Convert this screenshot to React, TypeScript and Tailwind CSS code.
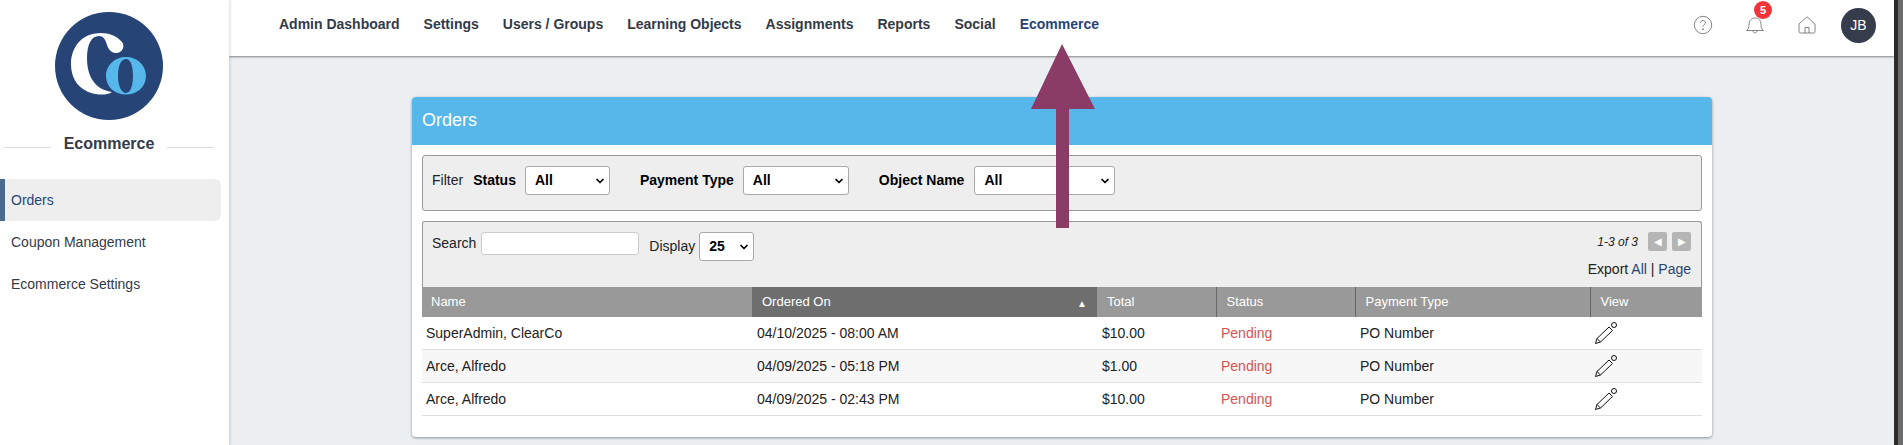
import { ChevronDown } from "lucide-react";

const navItems = ["Admin Dashboard", "Settings", "Users / Groups", "Learning Objects", "Assignments", "Reports", "Social", "Ecommerce"];

const rows = [
  { name: "SuperAdmin, ClearCo", date: "04/10/2025 - 08:00 AM", total: "$10.00" },
  { name: "Arce, Alfredo", date: "04/09/2025 - 05:18 PM", total: "$1.00" },
  { name: "Arce, Alfredo", date: "04/09/2025 - 02:43 PM", total: "$10.00" },
];

function Logo() {
  return (
    <svg viewBox="0 0 108 108" className="w-[108px] h-[108px]">
      <circle cx="54" cy="54" r="54" fill="#264576" />
      <path d="M46 21C26 21 16 36 16 52C16 72 30 82.500 47 82.500C51 82.500 54 82 57 80C43 78 32 68 32 46C32 33 36 24 44 24C49 24 51 29 52 33C54 39 58 41.500 62 41C68 40 70 34 67 30C62 24 54 21 46 21Z" fill="#fff" />
      <path fillRule="evenodd" d="M71 45C82 45 91 53 91 64C91 75 82 82.500 71 82.500C60 82.500 51 75 51 64C51 53 60 45 71 45ZM71 47C65 47 63 56 63 64C63 73 66 81 71 81C76 81 78 72 78 64C78 55 76 47 71 47Z" fill="#56b7ea" />
    </svg>
  );
}

function Pencil() {
  return (
    <svg viewBox="0 0 24 24" className="w-6 h-6" fill="none" stroke="#111" strokeWidth="1">
      <path d="M1.500 22.500L3 17.500L15 6L18.500 9.500L6.500 21L1.500 22.500Z" />
      <path d="M3 17.500L6.500 21" />
      <circle cx="20" cy="4" r="2.500" />
    </svg>
  );
}

function SelectBox({ value, width }: { value: string; width: string }) {
  return (
    <div className={`${width} h-[29px] bg-white border border-[#a9a9a9] rounded-[3px] flex items-center justify-between pl-[9px] pr-[3px] font-bold text-[14px] text-black`}>
      <span>{value}</span>
      <ChevronDown className="w-[12px] h-[12px] text-black" strokeWidth={3.5} />
    </div>
  );
}

export default function App() {
  return (
    <div className="h-[445px] w-[1903px] flex overflow-hidden bg-[#ebeff2] font-['Liberation_Sans',Arial,sans-serif] text-[#333a48] relative">
      {/* sidebar */}
      <aside className="w-[229px] shrink-0 bg-white shadow-[1px_0_3px_rgba(0,0,0,0.15)] z-10 flex flex-col">
        <div className="pt-3 pl-[55px]">
          <Logo />
        </div>
        <div className="flex items-center mt-[13px] pl-1 pr-[15px]">
          <div className="flex-1 h-px bg-[#dcdcdc] mt-[6px]"></div>
          <span className="px-[13px] text-[16px] font-bold leading-[22px]">Ecommerce</span>
          <div className="flex-1 h-px bg-[#dcdcdc] mt-[6px]"></div>
        </div>
        <nav className="mt-[24px] pr-[8px] text-[14px]">
          <div className="h-[42px] flex items-center pl-[6px] bg-[#eeeeee] border-l-[5px] border-[#4a6890] rounded-r-md text-[#264576]">Orders</div>
          <div className="h-[42px] flex items-center pl-[11px]">Coupon Management</div>
          <div className="h-[42px] flex items-center pl-[11px]">Ecommerce Settings</div>
        </nav>
      </aside>

      <div className="flex-1 flex flex-col min-w-0">
        {/* top bar */}
        <header className="h-[56px] shrink-0 bg-white shadow-[0_1px_2px_rgba(0,0,0,0.45)] flex items-center pl-[50px] pr-[18px] pb-[6px]">
          <nav className="flex gap-[24px] text-[14px] font-bold -mt-[2px]">
            {navItems.map((item) => (
              <span key={item} className={item === "Ecommerce" ? "text-[#264576]" : ""}>{item}</span>
            ))}
          </nav>
          <div className="ml-auto flex items-center gap-[32px] text-[#777]">
            <svg viewBox="0 0 20 20" className="w-[20px] h-[20px]" fill="none" stroke="currentColor" strokeWidth="0.9">
              <circle cx="10" cy="10" r="8.700" />
              <path d="M7.600 7.800C7.600 6.400 8.700 5.600 10 5.600C11.400 5.600 12.400 6.400 12.400 7.600C12.400 9.400 10 9.500 10 11.600" />
              <circle cx="10" cy="14.200" r="0.500" fill="currentColor" />
            </svg>
            <div className="relative">
              <svg viewBox="0 0 20 20" className="w-[20px] h-[20px]" fill="none" stroke="currentColor" strokeWidth="0.9">
                <path d="M1.500 15.500C3.500 14 4 12.500 4 9.500C4 5.500 6.500 3 10 3C13.500 3 16 5.500 16 9.500C16 12.500 16.500 14 18.500 15.500Z" />
                <path d="M8 15.700C8 18.400 12 18.400 12 15.700" />
              </svg>
              <span className="absolute -top-[14px] left-[9px] w-[18px] h-[18px] rounded-full bg-[#f0343c] text-white text-[11px] font-bold flex items-center justify-center">5</span>
            </div>
            <svg viewBox="0 0 20 20" className="w-[20px] h-[20px] -mr-[8px]" fill="none" stroke="currentColor" strokeWidth="0.9">
              <path d="M2 9L10 1.800L18 9V16.500C18 17.500 17.500 18 16.500 18H3.500C2.500 18 2 17.500 2 16.500Z" />
              <path d="M8 18V12.500H12V18" />
            </svg>
            <div className="w-[35px] h-[35px] rounded-full bg-[#363c4b] text-white text-[14px] flex items-center justify-center">JB</div>
          </div>
        </header>

        {/* main */}
        <main className="flex-1 pt-[41px] pl-[183px] pr-[182px]">
          <section className="bg-white rounded-[4px] shadow-[0_1px_3px_rgba(0,0,0,0.4)] h-[340px]">
            <div className="h-[48px] bg-[#56b7ea] rounded-t-[4px] flex items-center pl-[10px] pb-[2px] text-white text-[18px]">Orders</div>
            <div className="pt-[10px] px-[10px]">
              <div className="h-[56px] bg-[#eeeeee] border border-[#999] rounded-[3px] flex items-center pl-[9px] pb-[5px] text-[14px] text-[#222]">
                <span>Filter</span>
                <b className="ml-[10px] mr-[9px] text-black">Status</b>
                <SelectBox value="All" width="w-[85px]" />
                <b className="ml-[30px] mr-[9px] text-black">Payment Type</b>
                <SelectBox value="All" width="w-[106px]" />
                <b className="ml-[30px] mr-[10px] text-black">Object Name</b>
                <SelectBox value="All" width="w-[141px]" />
              </div>

              <div className="mt-[10px] bg-[#eeeeee] border border-[#999] border-b-0 rounded-t-[3px] h-[66px] flex justify-between pt-[10px] pl-[9px] pr-[10px] text-[14px] text-[#222]">
                <div className="flex items-start">
                  <span className="leading-[22px]">Search</span>
                  <div className="ml-[5px] w-[158px] h-[23px] bg-white border border-[#ccc] rounded-[3px]"></div>
                  <span className="ml-[10px] mt-[3px] leading-[22px]">Display</span>
                  <div className="ml-[4px]"><SelectBox value="25" width="w-[55px]" /></div>
                </div>
                <div className="flex flex-col items-end">
                  <div className="flex items-center gap-[5px] h-[19px]">
                    <i className="text-[12px] mr-[5px]">1-3 of 3</i>
                    <span className="w-[19px] h-[19px] rounded-[2px] bg-[#b5b5b5] text-white text-[10px] flex items-center justify-center">◀</span>
                    <span className="w-[19px] h-[19px] rounded-[2px] bg-[#b5b5b5] text-white text-[10px] flex items-center justify-center">▶</span>
                  </div>
                  <div className="mt-[9px] leading-[18px]">Export <span className="text-[#264576]">All</span> | <span className="text-[#264576]">Page</span></div>
                </div>
              </div>

              <table className="w-[1280px] table-fixed border-collapse text-[14px] text-[#222]">
                <thead>
                  <tr className="h-[30px] bg-[#999999] text-white text-[13px] text-left">
                    <th className="w-[330px] font-normal pl-[9px]">Name</th>
                    <th className="w-[345px] font-normal pl-[10px] bg-[#6e6e6e] relative">
                      Ordered On
                      <span className="absolute right-[10px] top-[9px] text-[10px]">▲</span>
                    </th>
                    <th className="w-[119px] font-normal pl-[10px] border-r border-[#666]">Total</th>
                    <th className="w-[139px] font-normal pl-[10px] border-r border-[#666]">Status</th>
                    <th className="w-[235px] font-normal pl-[10px] border-r border-[#666]">Payment Type</th>
                    <th className="font-normal pl-[10px]">View</th>
                  </tr>
                </thead>
                <tbody>
                  {rows.map((r, i) => (
                    <tr key={i} className={`border-b border-[#e0e0e0] ${i === 0 ? "h-[32px]" : "h-[33px]"} ${i === 1 ? "bg-[#f7f7f7]" : "bg-white"}`}>
                      <td className="pl-[4px] pt-[1px]">{r.name}</td>
                      <td className="pl-[5px] pt-[1px]">{r.date}</td>
                      <td className="pl-[5px] pt-[1px]">{r.total}</td>
                      <td className="pl-[5px] pt-[1px] text-[#d9534f]">Pending</td>
                      <td className="pl-[5px] pt-[1px]">PO Number</td>
                      <td className="pl-[4px]"><Pencil /></td>
                    </tr>
                  ))}
                </tbody>
              </table>
            </div>
          </section>
        </main>
      </div>

      {/* window edge */}
      <div className="w-[4px] shrink-0 bg-[#2b2b2b] z-10"></div>
      <div className="w-[5px] shrink-0 bg-[#6b6b6b] z-10"></div>

      {/* annotation arrow */}
      <svg viewBox="0 0 1903 445" className="absolute inset-0 w-[1903px] h-[445px] pointer-events-none z-20">
        <path d="M1062 44L1095 109H1069V228H1056V109H1031Z" fill="#8a3b66" />
      </svg>
    </div>
  );
}
